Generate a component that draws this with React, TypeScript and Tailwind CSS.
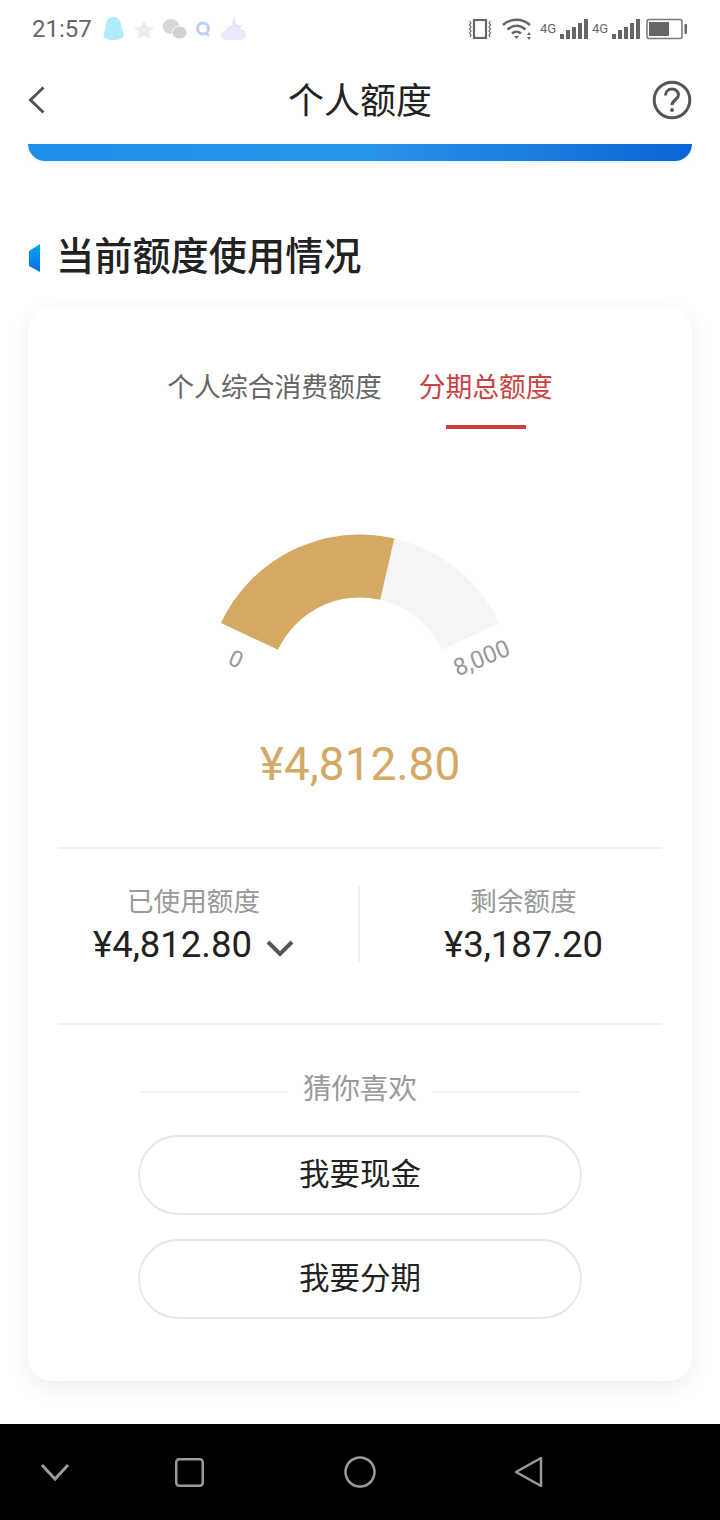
const cjk = "font-['Roboto','Noto_Sans_CJK_SC',sans-serif]";

function StatusBar() {
  return (
    <div className="flex h-[56px] items-center justify-between pl-[32px] pr-[32px] pt-[1px]">
      <div className="flex items-center">
        <span className="text-[24px] leading-none text-[#666]">21:57</span>
        {/* notification icons, faded */}
        <svg width="146" height="26" viewBox="0 0 146 26" className="ml-[11px]">
          <path d="M10.500 1c5 0 7.500 4 7.500 8.500 0 3 2.500 6 2.500 9.500 0 2-1 3-2.500 3.500-2 1-5 1.500-7.500 1.500s-5.500-.5-7.500-1.500C1.500 22 .5 21 .5 19c0-3.500 2.500-6.500 2.500-9.500C3 5 5.500 1 10.500 1z" fill="#b2ebfb" />
          <path d="M41 4l3 6.500 7 .8-5 4.700 1.400 7-6.400-3.500-6.400 3.500 1.400-7-5-4.700 7-.8z" fill="#ececec" />
          <ellipse cx="68" cy="10.500" rx="8.500" ry="7.500" fill="#d8d8d8" />
          <ellipse cx="76.500" cy="16.500" rx="7.500" ry="6.500" fill="#d2d2d2" stroke="#fff" strokeWidth="1" />
          <circle cx="100" cy="12.500" r="5.500" fill="none" stroke="#bcd0f7" strokeWidth="3" />
          <path d="M103 17l3 3" stroke="#d8c6e8" strokeWidth="2" />
          <path d="M123 24c-3 0-5-2-5-4.500s2-4.500 4.500-4.500c1.500-4 5-6.500 9-6.500 3.500 0 6.500 2 7.500 5 2.500.5 4 2.500 4 5 0 3-2 5.500-5 5.500z" fill="#e8eafa" />
          <path d="M133 1c-2 2-2 6 1 7.500 2 1 4.500.5 6-.5-.5 2-3 4-6 3.500-3.500-.5-5-3-4.500-6 .3-2 1.700-3.700 3.500-4.500z" fill="#dfe3f7" />
        </svg>
      </div>
      <div className="flex items-center">
        <svg width="24" height="20" viewBox="0 0 24 20" fill="none" stroke="#666">
          <rect x="6" y="1" width="12" height="18" strokeWidth="2.200" />
          <path d="M1.500 2l1.500 2-1.500 2 1.500 2-1.500 2 1.500 2-1.500 2 1.500 2-1 2M22.500 2l-1.500 2 1.500 2-1.500 2 1.500 2-1.500 2 1.500 2-1.500 2 1 2" strokeWidth="1.200" />
        </svg>
        <svg width="32" height="22" viewBox="0 0 32 22" fill="none" stroke="#666" strokeWidth="2.400" className="ml-[10px]">
          <path d="M1 7c8-7 19-7 27 0M5.500 11.500c6-5 12-5 18 0M10 15.500c3-2.500 6-2.500 9 0" />
          <path d="M12 18h5l-2.500 3z" fill="#666" stroke="none" />
          <path d="M27 14l2 3h-4zM27 22l2-3h-4z" fill="#666" stroke="none" />
        </svg>
        <span className="ml-[6px] w-[15px] text-[13px] leading-none text-[#666]">4G</span>
        <Signal className="ml-[5px]" />
        <span className="ml-[4px] w-[15px] text-[13px] leading-none text-[#666]">4G</span>
        <Signal className="ml-[5px]" />
        <svg width="42" height="22" viewBox="0 0 42 22" className="ml-[6px]">
          <rect x="1" y="1.500" width="35" height="19" rx="2" fill="none" stroke="#777" strokeWidth="1.500" />
          <rect x="3" y="4" width="20" height="14" fill="#666" />
          <rect x="38.500" y="6" width="2.500" height="10" rx="1" fill="#666" />
        </svg>
      </div>
    </div>
  );
}

function Signal({ className }: { className: string }) {
  return (
    <svg width="28" height="20" viewBox="0 0 28 20" fill="#666" className={className}>
      <rect x="0" y="15" width="4" height="5" />
      <rect x="6" y="11" width="4" height="9" />
      <rect x="12" y="8" width="4" height="12" />
      <rect x="18" y="4" width="4" height="16" />
      <rect x="24" y="0" width="4" height="20" />
    </svg>
  );
}

function Header() {
  return (
    <div className="flex h-[88px] items-center justify-between px-[28px]">
      <div className="w-[40px]">
        <svg width="18" height="30" viewBox="0 0 18 30" fill="none" stroke="#555" strokeWidth="3" className="block">
          <path d="M15.500 2.500L2.500 15l13 12.500" />
        </svg>
      </div>
      <h1 className="pt-[3px] text-[36px] leading-none text-[#222]">个人额度</h1>
      <svg width="40" height="40" viewBox="0 0 40 40" fill="none">
        <circle cx="20" cy="20" r="17.800" stroke="#555" strokeWidth="3" />
        <path d="M13.500 15.500c0-4 3-6.500 6.500-6.500s6.500 2.500 6.500 6c0 4.500-6.500 5-6.500 10" stroke="#555" strokeWidth="3" />
        <circle cx="20" cy="30" r="2" fill="#555" />
      </svg>
    </div>
  );
}

// Arc geometry: centre (160,173) in the svg, ring from r=91 to r=153, 130 degrees of sweep
function ringPath(fromDeg: number, toDeg: number) {
  const cx = 160;
  const cy = 173;
  const pt = (r: number, deg: number) => {
    const a = (deg * Math.PI) / 180;
    return `${(cx - r * Math.cos(a)).toFixed(1)} ${(cy - r * Math.sin(a)).toFixed(1)}`;
  };
  return `M${pt(153.5, fromDeg)} A153.5 153.5 0 0 1 ${pt(153.5, toDeg)} L${pt(90.5, toDeg)} A90.5 90.5 0 0 0 ${pt(90.5, fromDeg)} Z`;
}

function Gauge() {
  const used = 4812.8 / 8000;
  const split = 25 + 129.5 * used;
  return (
    <svg width="320" height="180" viewBox="0 0 320 180" className="block">
      <path d={ringPath(split, 155)} fill="#f4f5f7" />
      <path d={ringPath(25, split)} fill="#d4a964" />
      <text x="36" y="152" fontSize="23" fill="#999" textAnchor="middle" transform="rotate(25 36 144)" fontFamily="Roboto">0</text>
      <text x="282" y="151" fontSize="24" fill="#999" textAnchor="middle" transform="rotate(-22 282 144)" fontFamily="Roboto">8,000</text>
    </svg>
  );
}

function Card() {
  return (
    <div className="mx-[28px] mt-[28px] h-[1074px] rounded-[24px] bg-white px-[30px] shadow-[0_6px_20px_rgba(0,0,0,0.07)]">
      <div className="flex justify-center pt-[63px]">
        <div className="mr-[37px] text-[26.800px] leading-[36px] text-[#666]">个人综合消费额度</div>
        <div className="flex flex-col items-center">
          <div className="text-[26.800px] leading-[36px] text-[#cc4040]">分期总额度</div>
          <div className="mt-[19px] h-[4px] w-[80px] bg-[#cc4040]" />
        </div>
      </div>
      <div className="mt-[86px] flex justify-center">
        <Gauge />
      </div>
      <div className="mt-[43px] text-center text-[46px] leading-[52px] text-[#d4a964]">¥4,812.80</div>
      <div className="mt-[57px] h-[2px] bg-[#f0f0f0]" />
      <div className="-mx-[30px] flex h-[174px] items-start pt-[35px]">
        <div className="flex w-[331px] flex-col items-center">
          <div className="text-[26.600px] leading-[36px] text-[#999]">已使用额度</div>
          <div className="mt-[3px] flex items-center text-[36.500px] leading-[44px] text-[#222]">
            ¥4,812.80
            <svg width="28" height="18" viewBox="0 0 28 18" fill="none" stroke="#555" strokeWidth="4" className="ml-[14px] mt-[5px]">
              <path d="M2 3l12 12L26 3" />
            </svg>
          </div>
        </div>
        <div className="-ml-[1px] mr-[1px] mt-[2px] h-[76px] w-[2px] bg-[#f0f0f0]" />
        <div className="flex w-[331px] flex-col items-center pr-[6px]">
          <div className="text-[26.600px] leading-[36px] text-[#999]">剩余额度</div>
          <div className="mt-[3px] text-[36.500px] leading-[44px] text-[#222]">¥3,187.20</div>
        </div>
      </div>
      <div className="h-[2px] bg-[#f0f0f0]" />
      <div className="mt-[47px] flex items-center justify-center">
        <div className="mt-[4px] h-[2px] w-[148px] bg-[#f0f0f0]" />
        <div className="mx-[15px] text-[28.500px] leading-[36px] text-[#999]">猜你喜欢</div>
        <div className="mt-[4px] h-[2px] w-[148px] bg-[#f0f0f0]" />
      </div>
      <div className="mt-[27px] flex flex-col items-center gap-[24px]">
        <div className="flex h-[80px] w-[444px] items-center justify-center rounded-full border-2 border-[#e8e8e8] text-[30.500px] text-[#222]">我要现金</div>
        <div className="flex h-[80px] w-[444px] items-center justify-center rounded-full border-2 border-[#e8e8e8] text-[30.500px] text-[#222]">我要分期</div>
      </div>
    </div>
  );
}

function NavBar() {
  return (
    <div className="mt-auto flex h-[96px] items-center bg-black pl-[40px]">
      <svg width="30" height="20" viewBox="0 0 30 20" fill="none" stroke="#9a9a9a" strokeWidth="3">
        <path d="M2 3l13 14L28 3" />
      </svg>
      <svg width="29" height="29" viewBox="0 0 29 29" fill="none" stroke="#9a9a9a" strokeWidth="2.500" className="ml-[105px]">
        <rect x="1.250" y="1.250" width="26.500" height="26.500" rx="3" />
      </svg>
      <svg width="32" height="32" viewBox="0 0 32 32" fill="none" stroke="#9a9a9a" strokeWidth="2.500" className="ml-[140px]">
        <circle cx="16" cy="16" r="14.500" />
      </svg>
      <svg width="29" height="32" viewBox="0 0 29 32" fill="none" stroke="#9a9a9a" strokeWidth="2.500" strokeLinejoin="round" className="ml-[138px]">
        <path d="M27 2v28L2 16z" />
      </svg>
    </div>
  );
}

export default function App() {
  return (
    <div className={`flex h-[1520px] w-[720px] flex-col overflow-hidden bg-white ${cjk}`}>
      <StatusBar />
      <Header />
      <div className="mx-[28px] h-[17px] rounded-b-[20px] bg-gradient-to-r from-[#1f8ee8] via-[#2a96e8] to-[#0a66d6] shadow-[0_1px_4px_rgba(30,120,220,0.12)]" />
      <div className="mt-[76px] flex h-[42px] items-center pl-[28px]">
        <svg width="12" height="28" viewBox="0 0 12 28" className="mr-[16px]">
          <defs>
            <linearGradient id="tag" x1="0" y1="0" x2="0" y2="1">
              <stop offset="0" stopColor="#00a8f0" />
              <stop offset="1" stopColor="#0a6be0" />
            </linearGradient>
          </defs>
          <path d="M12 0v28L1 22V7z" fill="url(#tag)" />
        </svg>
        <h2 className="-mt-[1px] text-[38.200px] font-medium leading-none text-[#222]">当前额度使用情况</h2>
      </div>
      <Card />
      <NavBar />
    </div>
  );
}
